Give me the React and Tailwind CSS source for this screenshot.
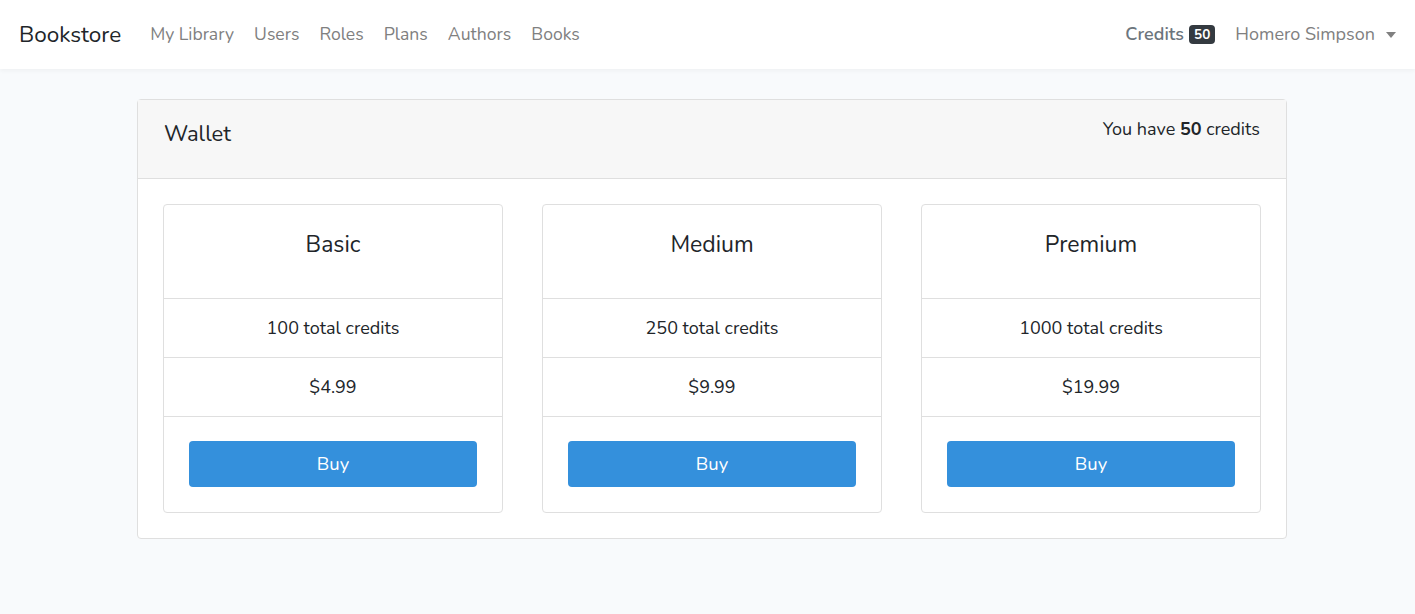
import React from "react";

const plans = [
  { name: "Basic", credits: 100, price: "$4.99" },
  { name: "Medium", credits: 250, price: "$9.99" },
  { name: "Premium", credits: 1000, price: "$19.99" },
];

const navLinks = ["My Library", "Users", "Roles", "Plans", "Authors", "Books"];

function PlanCard({ plan }) {
  return (
    <div className="flex flex-col border border-[#dfdfdf] rounded-[4px] bg-white">
      <div className="h-[94px] flex justify-center pt-[23px] text-[23px] text-[#212529] border-b border-[#dfdfdf]">
        {plan.name}
      </div>
      <div className="h-[59px] flex items-center justify-center text-[18px] text-[#212529] border-b border-[#dfdfdf]">
        {plan.credits} total credits
      </div>
      <div className="h-[59px] flex items-center justify-center text-[18px] text-[#212529] border-b border-[#dfdfdf]">
        {plan.price}
      </div>
      <div className="px-[25px] pt-[24px] pb-[25px]">
        <button className="w-full h-[46px] pt-[1px] rounded-[4px] bg-[#3490dc] text-white text-[18.5px]">
          Buy
        </button>
      </div>
    </div>
  );
}

export default function App() {
  return (
    <div className="min-h-screen bg-[#f8fafc] font-['Nunito','Lato',sans-serif]">
      {/* top navigation */}
      <nav className="h-[69px] bg-white shadow-[0_2px_4px_rgba(0,0,0,0.04)] flex items-center px-[19px]">
        <span className="text-[22.5px] text-[#212529] mr-[29px]">Bookstore</span>
        <div className="flex items-center gap-[20px] text-[17.6px] text-[#808080]">
          {navLinks.map((l) => (
            <span key={l}>{l}</span>
          ))}
        </div>
        <div className="ml-auto flex items-center gap-[20px] text-[18px]">
          <span className="text-[#6c757d] font-semibold flex items-center gap-[5px]">
            Credits
            <span className="bg-[#343a40] text-white text-[13.5px] font-bold rounded-[4px] px-[5px] py-[1px] leading-[17px]">
              50
            </span>
          </span>
          <span className="text-[#808080] flex items-center gap-[11px]">
            Homero Simpson
            <span className="w-0 h-0 border-l-[5px] border-r-[5px] border-t-[6px] border-l-transparent border-r-transparent border-t-[#808080]" />
          </span>
        </div>
      </nav>

      {/* wallet card */}
      <div className="pt-[30px] pl-[137px]">
        <div className="w-[1150px] bg-white border border-[#dfdfdf] rounded-[4px]">
          <div className="h-[79px] bg-[#f7f7f7] border-b border-[#dfdfdf] flex justify-between px-[26px]">
            <span className="text-[22px] text-[#212529] pt-[18px]">Wallet</span>
            <span className="text-[18px] text-[#212529] pt-[16px]">
              You have <b>50</b> credits
            </span>
          </div>
          <div className="grid grid-cols-3 gap-[39px] px-[25px] pt-[25px] pb-[25px]">
            {plans.map((p) => (
              <PlanCard key={p.name} plan={p} />
            ))}
          </div>
        </div>
      </div>
    </div>
  );
}
